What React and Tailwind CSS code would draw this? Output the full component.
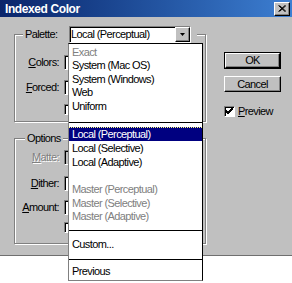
import React from 'react';

const raised = 'border border-t-white border-l-white border-r-black border-b-black shadow-[inset_-1px_-1px_0_#808080]';
const sunken = 'border border-t-[#808080] border-l-[#808080] border-r-white border-b-white shadow-[inset_1px_1px_0_#000]';
const groove = 'border border-[#808080] shadow-[inset_1px_1px_0_#fff,1px_1px_0_#fff]';

const Field = ({ u, label, disabled, className = '' }) => (
    <div className={`flex items-center ${className}`}>
        <span className={`w-[44px] text-right leading-[13px] whitespace-nowrap ${disabled ? 'text-[#808080] [text-shadow:1px_1px_0_#fff]' : ''}`}>
            <span className="underline underline-offset-1">{u}</span>{label}:
        </span>
        <div className={`ml-[5px] w-[70px] h-[15px] ${disabled ? 'bg-[#c0c0c0]' : 'bg-white'} ${sunken}`} />
    </div>
);

const SmallBox = ({ className = '' }) => (
    <div className={`flex ${className}`}>
        <div className="w-[44px]" />
        <div className={`ml-[5px] w-[11px] h-[11px] bg-white ${sunken}`} />
    </div>
);

const Item = ({ children, gray, h = 'h-[14px]', className = '' }) => (
    <div className={`${h} flex items-center pl-[3px] whitespace-nowrap ${gray ? 'text-[#808080]' : 'text-black'} ${className}`}>
        {children}
    </div>
);

const Sep = ({ className = '' }) => <div className={`h-px bg-black ${className}`} />;

const App = () => {
    return (
        <div
            className="w-[292px] h-[283px] bg-white overflow-hidden text-[11px] tracking-[-0.6px] text-black"
            style={{ fontFamily: "'Liberation Sans', Arial, sans-serif" }}
        >
            <div className="h-[256px] bg-[#c0c0c0] border-b border-[#6f6f6f] flex flex-col">
                {/* title bar */}
                <div className="h-[17px] flex items-center justify-between pl-[5px] pr-[2px] bg-gradient-to-r from-[#0a246a] to-[#3d7fd2]">
                    <span className="text-white font-bold text-[12px] tracking-[-0.4px] leading-none">Indexed Color</span>
                    <div className={`w-[16px] h-[14px] bg-[#c0c0c0] flex items-center justify-center ${raised}`}>
                        <svg width="8" height="7" viewBox="0 0 8 7">
                            <path d="M0.5 0.5 L7 6.5 M1.5 0.5 L8 6.5 M7 0.5 L0.5 6.5 M8 0.5 L1.5 6.5" stroke="#000" strokeWidth="1" />
                        </svg>
                    </div>
                </div>

                <div className="flex pl-[14px] pt-[9px]">
                    {/* left column */}
                    <div className="w-[193px] flex flex-col">
                        <fieldset className={`h-[96px] w-[192px] ${groove}`}>
                            <legend className="ml-[8px] pl-[2px] pr-[6px] bg-[#c0c0c0]">
                                <div className="flex items-center h-[17px]">
                                    <span className="w-[44px] leading-[13px]">Palette:</span>
                                    <div className={`relative w-[122px] h-[17px] bg-white flex items-center ${sunken}`}>
                                        <span className="flex-1 pl-[1px] overflow-hidden whitespace-nowrap leading-[13px]">Local (Perceptual)</span>
                                        <div className={`w-[15px] h-[15px] bg-[#c0c0c0] flex items-center justify-center ${raised}`}>
                                            <svg width="5" height="3" viewBox="0 0 5 3">
                                                <path d="M0 0 H5 L2.5 3 Z" fill="#000" />
                                            </svg>
                                        </div>

                                        {/* open dropdown list */}
                                        <div className="absolute z-10 top-[16px] left-[-2px] w-[135px] bg-white border-t border-t-black border-l border-l-[#808080] border-r border-r-black border-b border-b-[#808080] flex flex-col pt-[1px] pb-[2px]">
                                            <Item gray h="h-[14px]">Exact</Item>
                                            <Item h="h-[13px]">System (Mac OS)</Item>
                                            <Item h="h-[14px]">System (Windows)</Item>
                                            <Item h="h-[13px]">Web</Item>
                                            <Item h="h-[14px]">Uniform</Item>
                                            <Sep className="mt-[9px]" />
                                            <div className="mt-[4px] h-[14px] flex items-center pl-[3px] bg-[#000080] text-white border-t border-dotted border-[#ffff80] whitespace-nowrap">
                                                Local (Perceptual)
                                            </div>
                                            <Item h="h-[14px]">Local (Selective)</Item>
                                            <Item h="h-[14px]">Local (Adaptive)</Item>
                                            <div className="h-[14px]" />
                                            <Item gray h="h-[13px]">Master (Perceptual)</Item>
                                            <Item gray h="h-[14px]">Master (Selective)</Item>
                                            <Item gray h="h-[13px]">Master (Adaptive)</Item>
                                            <Sep className="mt-[7px]" />
                                            <Item h="h-[14px]" className="mt-[6px]">Custom...</Item>
                                            <Sep className="mt-[8px]" />
                                            <Item h="h-[14px]" className="mt-[4px]">Previous</Item>
                                        </div>
                                    </div>
                                </div>
                            </legend>
                            <Field u="C" label="olors" className="mt-[12px]" />
                            <Field u="F" label="orced" className="mt-[10px]" />
                            <SmallBox className="mt-[9px]" />
                        </fieldset>

                        <fieldset className={`mt-[10px] h-[112px] w-[192px] ${groove}`}>
                            <legend className="ml-[10px] px-[2px] leading-[13px] bg-[#c0c0c0]">Options</legend>
                            <Field u="M" label="atte" disabled className="mt-[5px]" />
                            <Field u="D" label="ither" className="mt-[11px]" />
                            <Field u="A" label="mount" className="mt-[9px]" />
                            <SmallBox className="mt-[7px]" />
                        </fieldset>
                    </div>

                    {/* right column */}
                    <div className="ml-[17px] w-[57px] flex flex-col pt-[26px]">
                        <div className="h-[17px] border border-black">
                            <div className={`h-full flex items-center justify-center ${raised}`}>OK</div>
                        </div>
                        <div className={`mt-[7px] h-[16px] flex items-center justify-center ${raised}`}>Cancel</div>
                        <div className="mt-[13px] flex items-center">
                            <div className={`w-[11px] h-[11px] bg-white flex items-center justify-center ${sunken}`}>
                                <svg width="7" height="7" viewBox="0 0 7 7">
                                    <path d="M0 3 L2 5 L7 0 M0 4 L2 6 L7 1 M0 2 L2 4 L7 -1" stroke="#000" strokeWidth="1" fill="none" />
                                </svg>
                            </div>
                            <span className="ml-[3px] leading-[13px]">
                                <span className="underline underline-offset-1">P</span>review
                            </span>
                        </div>
                    </div>
                </div>
            </div>
        </div>
    );
};

export default App;
